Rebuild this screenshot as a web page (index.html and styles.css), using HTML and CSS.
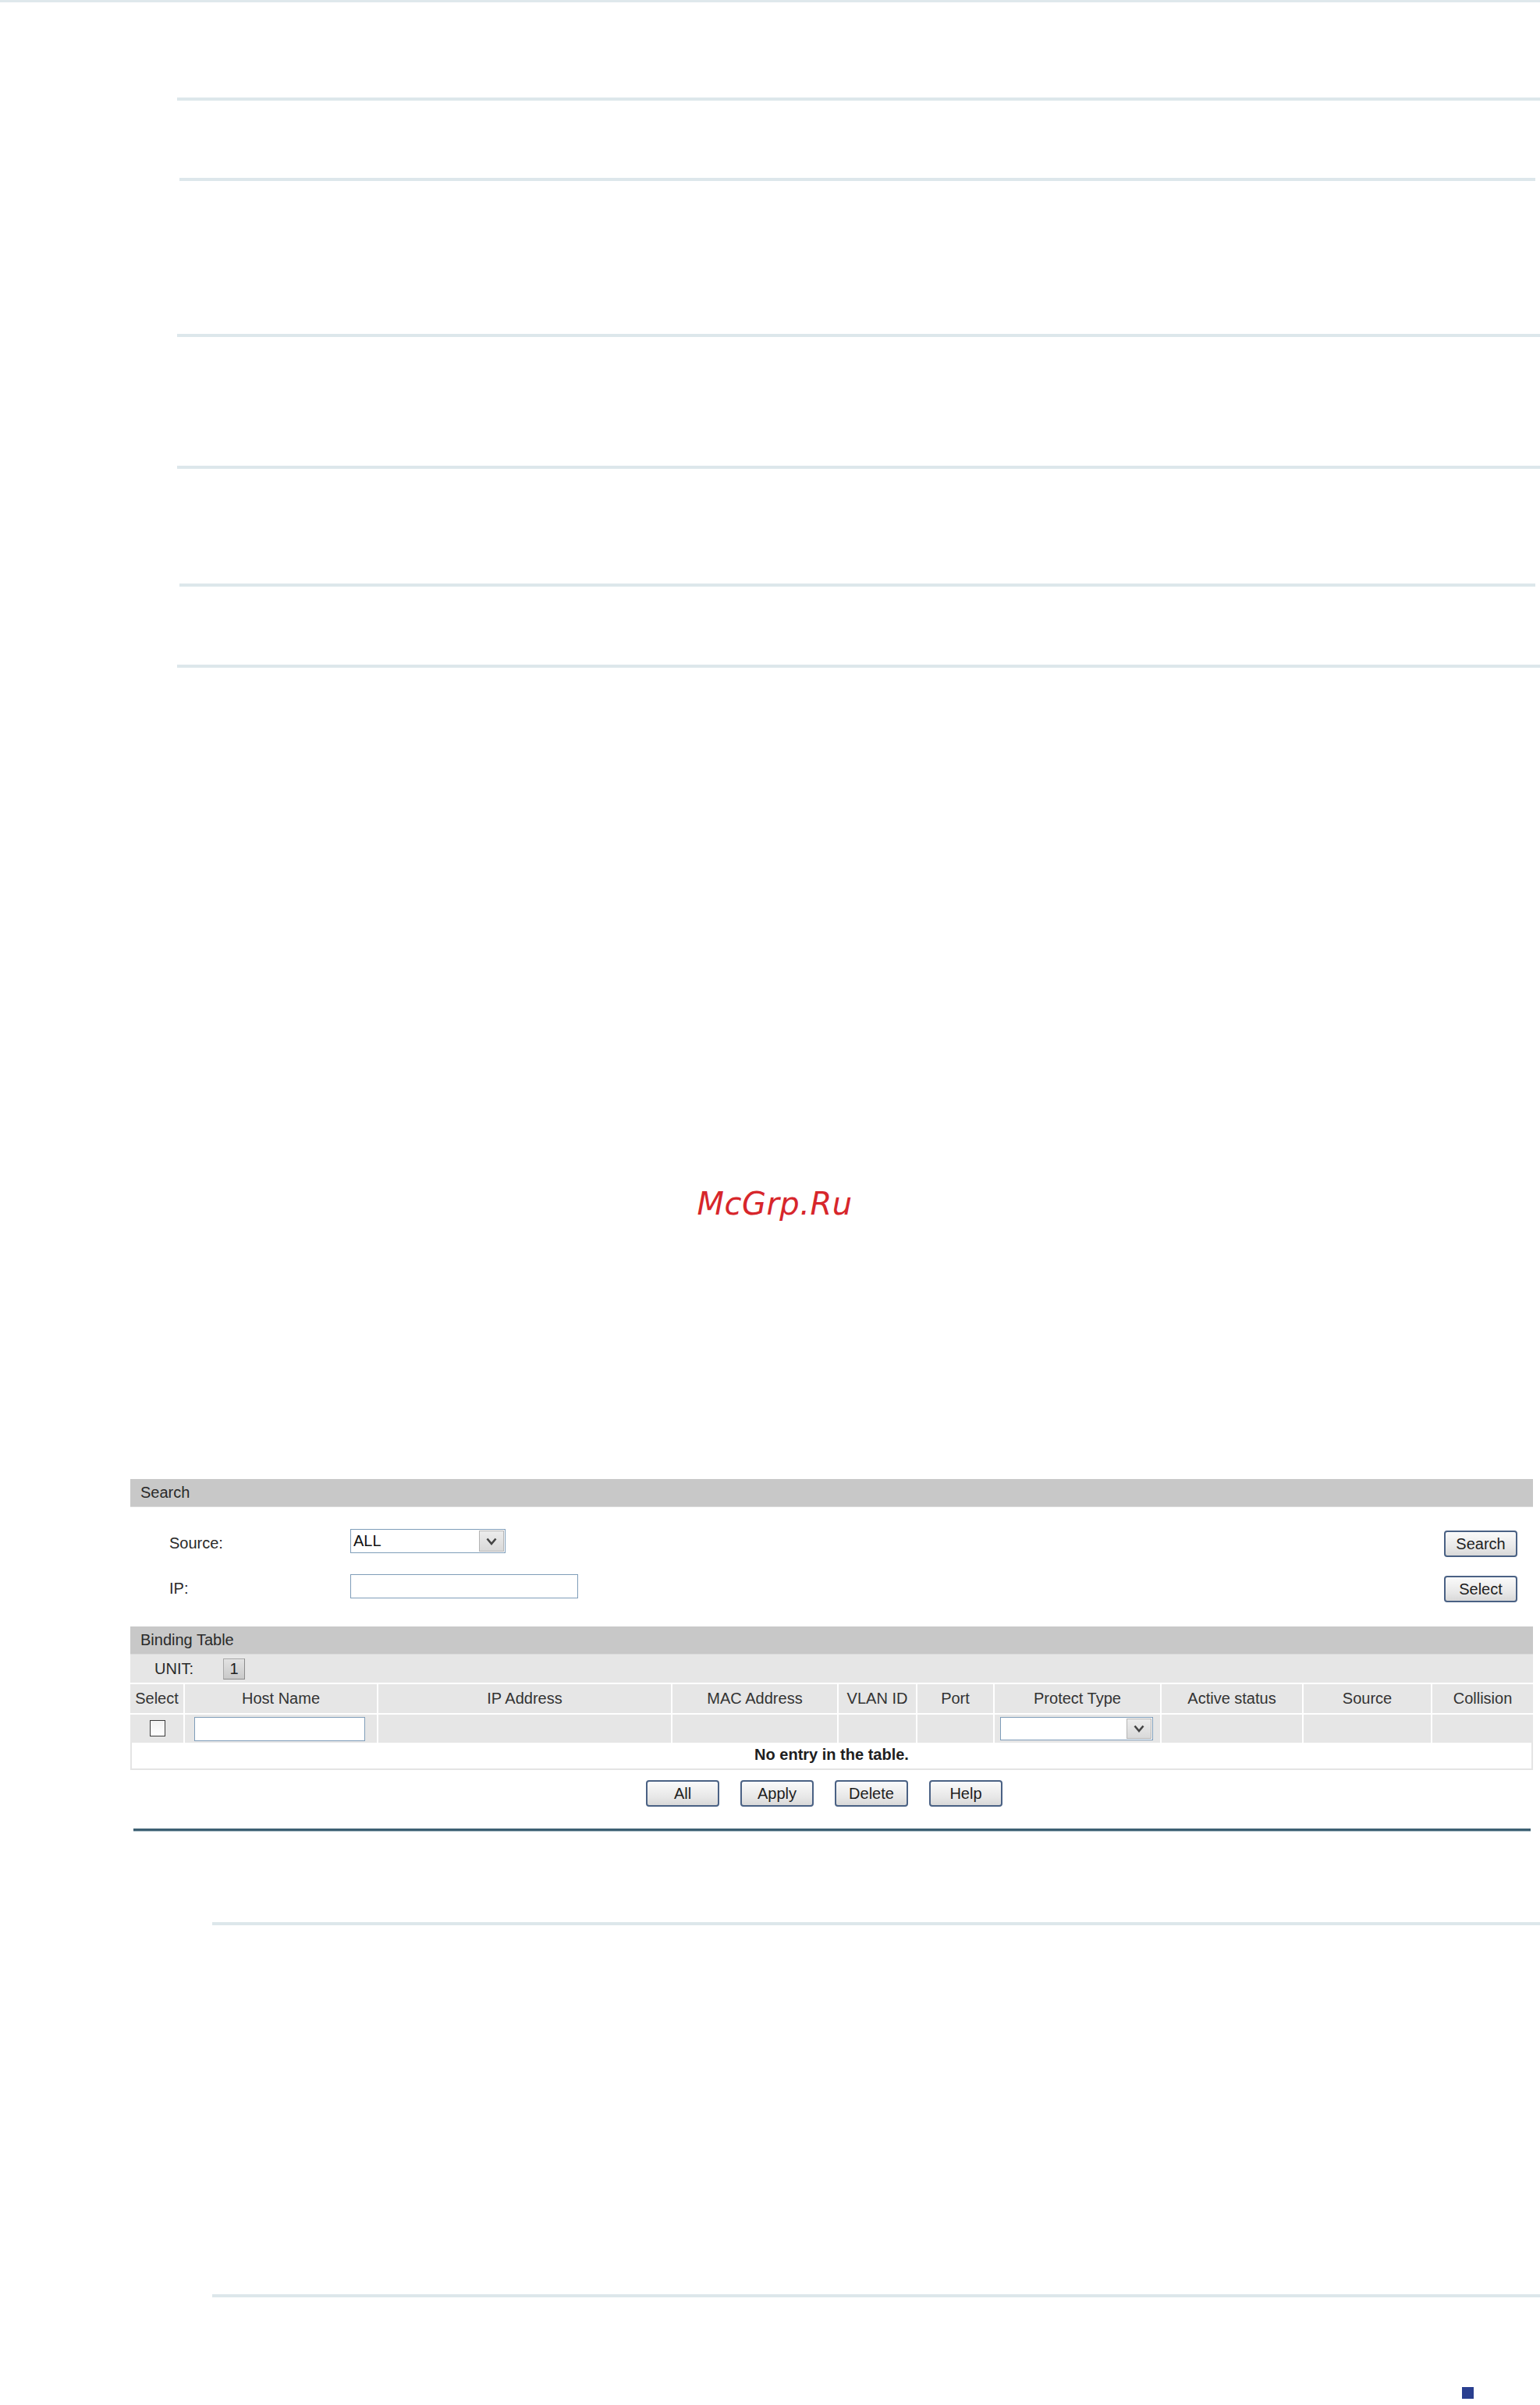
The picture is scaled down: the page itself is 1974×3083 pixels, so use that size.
FILE: index.html
```html
<!DOCTYPE html>
<html lang="en">
<head>
<meta charset="utf-8">
<title>Binding Table</title>
<link rel="stylesheet" href="styles.css">
</head>
<body>
<div class="page">
  <div class="topline"></div>
  <div class="rule r1"></div>
  <div class="rule inset r2"></div>
  <div class="rule r3"></div>
  <div class="rule r4"></div>
  <div class="rule inset r5"></div>
  <div class="rule r6"></div>

  <div class="watermark">McGrp.Ru</div>

  <div class="panel">
    <div class="sec-head">Search</div>
    <div class="search-body">
      <div class="form-row">
        <span class="label">Source:</span>
        <div class="field">
          <div class="dropdown dd-source">
            <span class="dd-value">ALL</span>
            <span class="dd-btn"><svg width="14" height="10" viewBox="0 0 14 10"><path d="M1.5 1.5 L7 8 L12.5 1.5" fill="none" stroke="#444444" stroke-width="2.6"/></svg></span>
          </div>
        </div>
        <button class="btn">Search</button>
      </div>
      <div class="form-row">
        <span class="label">IP:</span>
        <div class="field">
          <div class="textbox tb-ip"></div>
        </div>
        <button class="btn">Select</button>
      </div>
    </div>

    <div class="sec-head">Binding Table</div>
    <div class="unit-row">
      <span class="unit-label">UNIT:</span>
      <span class="unit-box">1</span>
    </div>
    <div class="grid-row head-row">
      <div class="cell">Select</div>
      <div class="cell">Host Name</div>
      <div class="cell">IP Address</div>
      <div class="cell">MAC Address</div>
      <div class="cell">VLAN ID</div>
      <div class="cell">Port</div>
      <div class="cell">Protect Type</div>
      <div class="cell">Active status</div>
      <div class="cell">Source</div>
      <div class="cell">Collision</div>
    </div>
    <div class="grid-row data-row">
      <div class="cell"><span class="checkbox"></span></div>
      <div class="cell cell-left"><div class="textbox tb-host"></div></div>
      <div class="cell"></div>
      <div class="cell"></div>
      <div class="cell"></div>
      <div class="cell"></div>
      <div class="cell cell-left">
        <div class="dropdown dd-protect">
          <span class="dd-value"></span>
          <span class="dd-btn"><svg width="14" height="10" viewBox="0 0 14 10"><path d="M1.5 1.5 L7 8 L12.5 1.5" fill="none" stroke="#444444" stroke-width="2.6"/></svg></span>
        </div>
      </div>
      <div class="cell"></div>
      <div class="cell"></div>
      <div class="cell"></div>
    </div>
    <div class="no-entry">No entry in the table.</div>
    <div class="actions">
      <button class="btn">All</button>
      <button class="btn">Apply</button>
      <button class="btn">Delete</button>
      <button class="btn">Help</button>
    </div>
  </div>

  <div class="dark-rule"></div>
  <div class="rule wide r7"></div>
  <div class="rule wide r8"></div>
  <div class="mark"></div>
</div>
</body>
</html>
```

FILE: styles.css
```css
html, body {
  margin: 0;
  padding: 0;
  background: #ffffff;
}

body {
  font-family: "Liberation Sans", Arial, sans-serif;
  color: #2a2a2a;
}

.page {
  width: 1974px;
  min-height: 3083px;
  display: flex;
  flex-direction: column;
  align-items: flex-start;
}

.topline {
  width: 1974px;
  height: 3px;
  background: #dfe8ec;
}

.rule {
  height: 4px;
  background: #dde7eb;
  margin-left: 227px;
  width: 1747px;
}

.rule.inset {
  margin-left: 230px;
  width: 1738px;
}

.rule.wide {
  margin-left: 272px;
  width: 1702px;
}

.r1 { margin-top: 122px; }
.r2 { margin-top: 99px; }
.r3 { margin-top: 196px; }
.r4 { margin-top: 165px; }
.r5 { margin-top: 147px; }
.r6 { margin-top: 100px; }

.watermark {
  margin-top: 663px;
  width: 1974px;
  box-sizing: border-box;
  padding-left: 12px;
  text-align: center;
  font-family: "DejaVu Sans", sans-serif;
  font-style: oblique;
  font-size: 40px;
  line-height: 48px;
  color: #d7262b;
  letter-spacing: 0.5px;
}

.panel {
  margin-top: 329px;
  margin-left: 167px;
  width: 1798px;
  font-size: 20px;
}

.sec-head {
  height: 36px;
  box-sizing: border-box;
  background: #c8c8c8;
  border-bottom: 1px solid #dadada;
  padding-left: 13px;
  line-height: 35px;
  color: #2a2a2a;
}

.search-body {
  padding: 28px 20px 31px 50px;
  display: flex;
  flex-direction: column;
  gap: 22px;
}

.form-row {
  height: 36px;
  display: flex;
  align-items: center;
}

.form-row .btn {
  margin-top: 2px;
}

.label {
  width: 232px;
  color: #2a2a2a;
}

.field {
  flex: 1;
  align-self: flex-start;
  display: flex;
}

.dropdown {
  height: 31px;
  box-sizing: border-box;
  border: 1px solid #7f9db9;
  background: #ffffff;
  display: flex;
  align-items: stretch;
}

.dd-source { width: 199px; }
.dd-protect { width: 196px; height: 30px; }

.dd-value {
  flex: 1;
  padding-left: 3px;
  line-height: 29px;
  font-size: 20px;
  color: #111;
}

.dd-btn {
  width: 32px;
  box-sizing: border-box;
  margin: 1px;
  border: 1px solid #b4b4b4;
  background: linear-gradient(#ececec, #d9d9d9);
  display: flex;
  align-items: center;
  justify-content: center;
}

.textbox {
  height: 31px;
  box-sizing: border-box;
  border: 1px solid #7f9db9;
  background: #ffffff;
}

.tb-ip { width: 292px; }
.tb-host { width: 219px; }

.btn {
  width: 94px;
  height: 34px;
  box-sizing: border-box;
  padding: 0;
  border: 2px solid #4a6184;
  border-radius: 4px;
  background: linear-gradient(#fafafa, #e6e6e6 70%, #d8d8d8);
  font-family: "Liberation Sans", Arial, sans-serif;
  font-size: 20px;
  color: #1e1e1e;
}

.unit-row {
  height: 36px;
  background: #e6e6e6;
  display: flex;
  align-items: center;
  padding-left: 31px;
}

.unit-label {
  width: 88px;
  color: #2a2a2a;
}

.unit-box {
  width: 28px;
  height: 27px;
  box-sizing: border-box;
  border: 1px solid #a8a8a8;
  border-right-color: #8c8c8c;
  border-bottom-color: #8c8c8c;
  background: linear-gradient(#e2e2e2, #c9c9c9);
  text-align: center;
  line-height: 25px;
  font-size: 20px;
  color: #222;
}

.grid-row {
  display: grid;
  grid-template-columns: 68px 248px 377px 213px 101px 99px 214px 182px 165px 131px;
  border-top: 2px solid #ffffff;
  background: #e6e6e6;
}

.head-row { height: 37px; }
.data-row { height: 36px; }

.cell {
  box-sizing: border-box;
  border-left: 2px solid #ffffff;
  display: flex;
  align-items: center;
  justify-content: center;
  color: #333333;
  white-space: nowrap;
}

.cell:first-child { border-left: none; }

.cell-left {
  justify-content: flex-start;
}

.data-row .cell-left:nth-child(2) { padding-left: 12px; }
.data-row .cell-left:nth-child(7) { padding-left: 7px; }

.checkbox {
  width: 20px;
  height: 21px;
  box-sizing: border-box;
  border: 1px solid #3c3c3c;
  background: linear-gradient(#f2f2f2, #ffffff);
  margin-left: 1px;
  margin-bottom: 2px;
}

.no-entry {
  height: 35px;
  box-sizing: border-box;
  border: 2px solid #e4e4e4;
  border-top: none;
  background: #ffffff;
  text-align: center;
  line-height: 31px;
  font-weight: bold;
  color: #1e1e1e;
}

.actions {
  margin-top: 13px;
  display: flex;
  justify-content: center;
  gap: 27px;
  padding-right: 19px;
}

.dark-rule {
  margin-top: 28px;
  margin-left: 171px;
  width: 1791px;
  height: 3px;
  background: #3d6073;
  box-shadow: 0 1px 0 #aebfc7;
}

.r7 { margin-top: 117px; }
.r8 { margin-top: 473px; }

.mark {
  margin-top: 115px;
  margin-left: 1874px;
  width: 15px;
  height: 15px;
  background: #2a3f8f;
}
```
